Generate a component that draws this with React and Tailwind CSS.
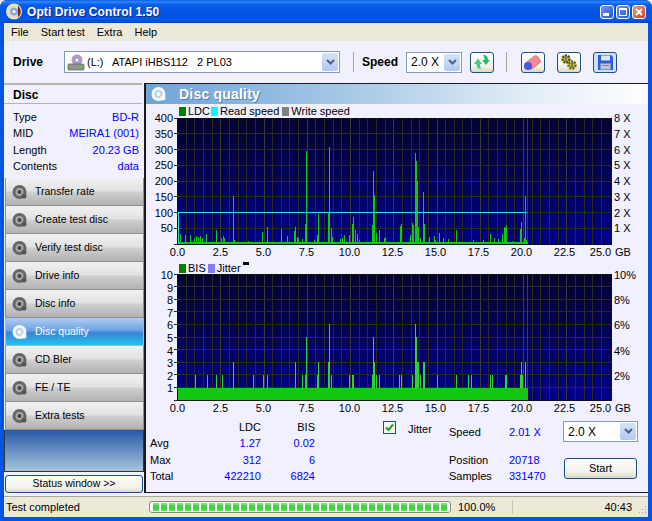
import React from 'react';

// spike positions read off the plots: [x, top] in screen pixels
const ldcBars = [
  [180, 234], [185, 235], [190, 235], [194, 238], [196, 236], [198, 237], [200, 236], [202, 238], [206, 234], [216, 230],
  [221, 238], [223, 236], [224, 238], [233, 196], [234, 240], [248, 241], [262, 232], [267, 227], [281, 229], [287, 236],
  [294, 231], [295, 227], [297, 237], [298, 238], [302, 239], [305, 224], [306, 151], [314, 240], [318, 214], [317, 235],
  [328, 212], [329, 147], [331, 228], [332, 237], [340, 239], [342, 238], [344, 235], [349, 235], [352, 224], [353, 217],
  [355, 230], [357, 234], [359, 240], [372, 225], [373, 171], [374, 195], [376, 233], [379, 230], [384, 238], [385, 237],
  [400, 226], [401, 224], [410, 235], [412, 223], [413, 225], [415, 153], [416, 161], [417, 181], [418, 227], [420, 238],
  [423, 192], [424, 224], [429, 237], [434, 236], [435, 240], [439, 233], [443, 238], [448, 239], [456, 230], [473, 240],
  [483, 240], [490, 234], [494, 238], [498, 239], [502, 234], [504, 227], [505, 228], [506, 225], [512, 241], [520, 229],
  [521, 222], [524, 238], [525, 196], [526, 240],
];

const bisBars = [
  [195, 2], [207, 2], [216, 2], [222, 2], [233, 3], [253, 2], [263, 2], [267, 2], [295, 3], [302, 2], [305, 2], [306, 5],
  [317, 2], [318, 3], [328, 3], [329, 6], [331, 2], [349, 2], [352, 2], [353, 2], [372, 2], [373, 5], [374, 3], [376, 2],
  [379, 2], [399, 2], [401, 2], [412, 2], [415, 6], [416, 5], [417, 3], [418, 3], [420, 2], [423, 3], [424, 3], [437, 2],
  [456, 2], [468, 2], [471, 2], [490, 2], [492, 2], [505, 2], [506, 2], [520, 2], [521, 3], [522, 2], [525, 3],
];

const xLabels = ['0.0', '2.5', '5.0', '7.5', '10.0', '12.5', '15.0', '17.5', '20.0', '22.5'];
const navItems = ['Transfer rate', 'Create test disc', 'Verify test disc', 'Drive info', 'Disc info', 'Disc quality', 'CD Bler', 'FE / TE', 'Extra tests'];

const DiscIcon = ({ active, light }) => (
  <svg width="16" height="16" viewBox="0 0 16 16" className="shrink-0">
    <circle cx="7.5" cy="8" r="7" fill={active || light ? '#f4f8ff' : '#666'} />
    <circle cx="7.5" cy="8" r="4" fill={active || light ? '#b8cfe8' : '#aaa'} />
    <circle cx="7.5" cy="8" r="2" fill={active || light ? '#fff' : '#444'} />
    <circle cx="12" cy="12" r="2.5" fill={active || light ? '#f4f8ff' : '#555'} />
  </svg>
);

const Plot = ({ id, top, step, rows, children }) => {
  const h = step * rows;
  const verticals = Array.from({ length: 50 }, (_, i) => 177.5 + i * 8.65);
  return (
    <svg width="438" height="128" viewBox={`174 ${top} 438 128`} shapeRendering="crispEdges" className="shrink-0">
      <defs>
        <linearGradient id={id} x1="0" y1="0" x2="0" y2="1">
          <stop offset="0" stopColor="#03032f" />
          <stop offset="1" stopColor="#000088" />
        </linearGradient>
      </defs>
      <rect x="177.5" y={top} width="433.5" height={h} fill={`url(#${id})`} />
      {verticals.map((x, i) => (
        <line key={i} x1={x} x2={x} y1={top} y2={top + h} stroke={i % 5 === 0 ? '#3b3b33' : '#2d2b20'} />
      ))}
      {Array.from({ length: rows + 1 }, (_, i) => (
        <g key={i}>
          <line x1="174" x2="611" y1={top + i * step} y2={top + i * step} stroke="#2d2b20" />
          <line x1="174" x2="178" y1={top + i * step} y2={top + i * step} stroke="#222" />
        </g>
      ))}
      <line x1="307.5" x2="307.5" y1={top} y2={top + h} stroke="#34346a" />
      <line x1="523.5" x2="523.5" y1={top} y2={top + h} stroke="#38386a" />
      <line x1="527.5" x2="527.5" y1={top} y2={top + h} stroke="#800c86" />
      {children}
      <rect x="177" y={top} width="1" height={h + 1} fill="#111" />
      <rect x="177" y={top} width="435" height="1" fill="#111" />
      <rect x="611" y={top} width="1" height={h + 1} fill="#111" />
      <rect x="177" y={top + h} width="435" height="1" fill="#111" />
    </svg>
  );
};

const AxisX = () => (
  <div className="flex h-[12px] leading-[13px] pl-[10px]">
    {xLabels.map((l) => (
      <span key={l} className="w-[43px] text-center">{l}</span>
    ))}
    <span className="w-[29px] text-center">25.0</span>
    <span>GB</span>
  </div>
);

const NavButton = ({ label, active }) => (
  <div
    className={`h-[28px] flex items-center gap-[7px] pl-[6px] text-[10.5px] border-b border-r border-l ${
      active
        ? 'bg-[linear-gradient(#afcdf3,#6ea3e2_45%,#3a84d2_55%,#22c2ef)] text-white border-[#9bb7d8]'
        : 'bg-[linear-gradient(#f1f1f1,#e2e2e2_48%,#cfcfcf_52%,#b2b2b2)] text-black border-[#8f8f8f]'
    }`}
  >
    <DiscIcon active={active} />
    <span>{label}</span>
  </div>
);

const Chevron = () => (
  <svg width="9" height="7" viewBox="0 0 9 7">
    <path d="M1 1 L4.5 4.5 L8 1" fill="none" stroke="#4d6185" strokeWidth="2" />
  </svg>
);

const Select = ({ className, btn, children }) => (
  <div className={`flex items-center bg-white border border-[#7f9db9] p-px ${className}`}>
    <div className="flex-1 flex items-center min-w-0">{children}</div>
    <div className={`${btn} self-stretch flex items-center justify-center rounded-[2px] bg-[linear-gradient(#d6e3fb,#b2c8f3)]`}>
      <Chevron />
    </div>
  </div>
);

const ToolButton = ({ blue, children }) => (
  <div
    className={`w-[24px] h-[21px] flex items-center justify-center rounded-[3px] border border-[#1f4f7f] ${
      blue ? 'bg-[#cfe0fb] border-[#1c4fb0]' : 'bg-[linear-gradient(#fefefe,#f3f1e6_70%,#dcd8c4)]'
    }`}
  >
    {children}
  </div>
);

const Dot = ({ children, value }) => (
  <div className="flex h-[16px] items-center">
    <span className="w-[60px]">{children}</span>
    <span className="text-[#0000ff]">{value}</span>
  </div>
);

export default function App() {
  return (
    <div className="w-[652px] h-[521px] flex flex-col rounded-t-[7px] bg-[#0453e2] overflow-hidden text-[11px] text-black font-['Liberation_Sans',sans-serif]">
      {/* title bar */}
      <div className="h-[23px] shrink-0 flex items-center pl-[6px] pr-[6px] bg-[linear-gradient(#0a5be6,#2f86f8_8%,#0a5fe8_20%,#0352e0_55%,#0458ea_85%,#0344c4)]">
        <svg width="17" height="17" viewBox="0 0 17 17" className="shrink-0">
          <circle cx="8" cy="8.5" r="8" fill="#eadfb8" />
          <path d="M12 2.5 A8 8 0 0 1 12 14.5 Z" fill="#7a2218" />
          <circle cx="8" cy="8.5" r="4" fill="#8aa6d8" />
          <circle cx="8" cy="8.5" r="1.6" fill="#fff" />
        </svg>
        <span className="ml-[4px] text-white font-bold text-[12px] tracking-[0.1px] [text-shadow:1px_1px_#0f2a89]">Opti Drive Control 1.50</span>
        <div className="ml-auto flex gap-[2px] items-center">
          <div className="w-[14px] h-[14px] rounded-[3px] border border-white bg-[linear-gradient(135deg,#6f97ee,#2a56d0)] flex items-end pl-[2px] pb-[2px]">
            <div className="w-[6px] h-[3px] bg-white" />
          </div>
          <div className="w-[14px] h-[14px] rounded-[3px] border border-white bg-[linear-gradient(135deg,#6f97ee,#2a56d0)] flex items-center justify-center">
            <div className="w-[8px] h-[8px] border border-white border-t-2" />
          </div>
          <div className="w-[14px] h-[14px] rounded-[3px] border border-white bg-[linear-gradient(135deg,#eda08a,#d0391a)] flex items-center justify-center">
            <svg width="8" height="8" viewBox="0 0 8 8">
              <path d="M1 1 L7 7 M7 1 L1 7" stroke="#fff" strokeWidth="2" />
            </svg>
          </div>
        </div>
      </div>

      <div className="mx-[4px] mb-[4px] flex-1 flex flex-col bg-[#f0f0ff] min-h-0">
        {/* menu */}
        <div className="h-[18px] shrink-0 bg-[#ece9d8] flex items-center pl-[7px] gap-[12px]">
          <span>File</span>
          <span>Start test</span>
          <span>Extra</span>
          <span>Help</span>
        </div>

        {/* toolbar */}
        <div className="h-[42px] shrink-0 flex items-center pl-[9px]">
          <span className="w-[51px] font-bold text-[12px]">Drive</span>
          <Select className="w-[276px] h-[22px]" btn="w-[16px]">
            <svg width="18" height="17" viewBox="0 0 18 17" className="ml-[1px] shrink-0">
              <ellipse cx="10" cy="6" rx="5.5" ry="5.5" fill="#a99ac9" />
              <circle cx="10" cy="6" r="1.6" fill="#fff" />
              <rect x="1" y="10" width="16" height="6" rx="1" fill="#8f9a8c" stroke="#55604f" strokeWidth="0.7" />
              <rect x="12" y="12" width="2" height="1.5" fill="#3ccf3c" />
            </svg>
            <span className="ml-[2px] whitespace-pre">(L:)   ATAPI iHBS112   2 PL03</span>
          </Select>
          <div className="ml-[13px] w-px h-[20px] bg-[#aaa89c]" />
          <span className="ml-[8px] w-[44px] font-bold text-[12px]">Speed</span>
          <Select className="w-[56px] h-[21px]" btn="w-[16px]">
            <span className="ml-[3px] text-[12px]">2.0 X</span>
          </Select>
          <div className="ml-[8px]">
            <ToolButton>
              <svg width="18" height="16" viewBox="0 0 18 16">
                <path d="M10 1 C14 1 15 3 15 6 L17 6 L13 11 L9 6 L11.5 6 C11.5 4 11 3 10 1 Z" fill="#2fb56a" />
                <path d="M8 15 C4 15 3.5 12 3.5 10 L1 10 L5 4.5 L9 10 L7 10 C7 12 7.5 13 8 15 Z" fill="#3fcf7f" />
              </svg>
            </ToolButton>
          </div>
          <div className="ml-[12px] w-px h-[20px] bg-[#aaa89c]" />
          <div className="ml-[14px] flex gap-[12px]">
            <ToolButton>
              <svg width="20" height="17" viewBox="0 0 20 17">
                <rect x="6" y="1" width="9" height="14" rx="3" transform="rotate(52 10 8)" fill="#f58b92" stroke="#c65a62" strokeWidth="0.5" />
                <circle cx="5" cy="12" r="4" fill="#4a55e6" />
              </svg>
            </ToolButton>
            <ToolButton>
              <svg width="20" height="18" viewBox="0 0 20 18">
                <circle cx="7" cy="6" r="3.5" fill="#c9c21a" stroke="#4d4a10" strokeWidth="2.5" strokeDasharray="2 1" />
                <circle cx="13" cy="12" r="3.5" fill="#c9c21a" stroke="#6a6510" strokeWidth="2.5" strokeDasharray="2 1" />
                <rect x="6" y="3" width="2" height="5" fill="#777" />
                <rect x="12" y="9" width="2" height="5" fill="#777" />
              </svg>
            </ToolButton>
            <ToolButton blue>
              <svg width="17" height="17" viewBox="0 0 17 17">
                <path d="M1 1 H14 L16 3 V16 H1 Z" fill="#2f5fd8" />
                <rect x="4" y="1.5" width="9" height="5" fill="#dfe6f6" />
                <rect x="3.5" y="9.5" width="10" height="6" fill="#c8c8c8" />
                <rect x="5" y="11" width="7" height="1" fill="#888" />
              </svg>
            </ToolButton>
          </div>
        </div>

        <div className="flex-1 flex min-h-0">
          {/* left column */}
          <div className="w-[140px] shrink-0 flex flex-col">
            <div className="border-t-2 border-[#b5b5b5] h-[21px] flex items-center pl-[9px] pt-[1px] font-bold text-[12px] border-b border-b-[#b5b5b5] mr-[2px]">Disc</div>
            <div className="h-[74px] pl-[9px] pr-[5px] pt-[5px]">
              {[
                ['Type', 'BD-R'],
                ['MID', 'MEIRA1 (001)'],
                ['Length', '20.23 GB'],
                ['Contents', 'data'],
              ].map(([k, v]) => (
                <div key={k} className="h-[16.3px] flex items-center justify-between">
                  <span>{k}</span>
                  <span className="text-[#0000ff]">{v}</span>
                </div>
              ))}
            </div>
            <div className="ml-[1px]">
              {navItems.map((n) => (
                <NavButton key={n} label={n} active={n === 'Disc quality'} />
              ))}
            </div>
            <div className="h-[42px] shrink-0 border-x border-b border-[#333] bg-[linear-gradient(#2859a6,#a6c5dc)]" />
            <div className="mt-[3px] mx-[1px] h-[18px] flex items-center justify-center text-[10.5px] rounded-[3px] border border-[#1b4a94] bg-[linear-gradient(#fdfdfb,#f2f1ea_75%,#dcd8c8)]">
              Status window &gt;&gt;
            </div>
          </div>

          {/* main panel */}
          <div className="flex-1 mb-[3px] flex flex-col border-l-2 border-t border-b border-[#1b1b1b] min-w-0">
            <div className="h-[20px] shrink-0 flex items-center pl-[5px] bg-[linear-gradient(90deg,#6fa3d6,#aecde8_45%,#e0ecf5_75%,#ffffff)]">
              <DiscIcon light />
              <span className="ml-[12px] text-white font-bold text-[14px] tracking-[0.2px] [text-shadow:1px_1px_#4f7fb0]">Disc quality</span>
            </div>
            <div className="flex-1 flex flex-col min-h-0">
              {/* LDC chart */}
              <div className="h-[14px] flex items-center pl-[33px] pt-[1px]">
                <span className="w-[7px] h-[9px] bg-[#008000]" />
                <span className="ml-[2px]">LDC</span>
                <span className="ml-[1px] w-[7px] h-[9px] bg-[#00ffff]" />
                <span className="ml-[2px]">Read speed</span>
                <span className="ml-[3px] w-[7px] h-[9px] bg-[#808080]" />
                <span className="ml-[2px]">Write speed</span>
              </div>
              <div className="flex">
                <div className="w-[28px] -mt-[7px] pr-[1px] text-right">
                  {[400, 350, 300, 250, 200, 150, 100, 50].map((n) => (
                    <div key={n} className="h-[15.75px] leading-[15.75px]">{n}</div>
                  ))}
                </div>
                <Plot id="ldcBg" top={118} step={15.75} rows={8}>
                  {ldcBars.map(([x, y], i) => (
                    <rect key={i} x={x} y={y} width="1" height={244 - y} fill="#10c810" />
                  ))}
                  <rect x="178" y="242" width="350" height="2" fill="#10c810" />
                  <path d="M178.5 244 V212.5 H527" fill="none" stroke="#2fe0e0" />
                </Plot>
                <div className="-mt-[7px] pl-[2px]">
                  {['8 X', '7 X', '6 X', '5 X', '4 X', '3 X', '2 X', '1 X'].map((n) => (
                    <div key={n} className="h-[15.75px] leading-[15.75px]">{n}</div>
                  ))}
                </div>
              </div>
              <AxisX />

              {/* BIS chart */}
              <div className="mt-[3px] h-[13px] flex items-center pl-[33px] pt-[1px]">
                <span className="w-[7px] h-[9px] bg-[#008000]" />
                <span className="ml-[2px]">BIS</span>
                <span className="ml-[2px] w-[7px] h-[9px] bg-[#8080ff]" />
                <span className="ml-[2px]">Jitter</span>
                <span className="ml-[2px] mb-[10px] w-[6px] h-[3px] bg-black" />
              </div>
              <div className="flex">
                <div className="w-[28px] -mt-[5px] pr-[1px] text-right">
                  {[10, 9, 8, 7, 6, 5, 4, 3, 2, 1].map((n) => (
                    <div key={n} className="h-[12.6px] leading-[12.6px]">{n}</div>
                  ))}
                </div>
                <Plot id="bisBg" top={274} step={12.6} rows={10}>
                  {bisBars.map(([x, v], i) => (
                    <rect key={i} x={x} y={400 - v * 12.6} width="1" height={v * 12.6} fill="#33d42a" />
                  ))}
                  <rect x="178" y="388" width="350" height="12.6" fill="#10c810" />
                </Plot>
                <div className="-mt-[11px] pl-[2px]">
                  {['10%', '8%', '6%', '4%', '2%'].map((n) => (
                    <div key={n} className="h-[25.2px] leading-[25.2px]">{n}</div>
                  ))}
                </div>
              </div>
              <AxisX />

              {/* stats */}
              <div className="flex mt-[6px]">
                <div className="ml-[4px] -mt-[1px] w-[165px] self-start grid grid-cols-[44px_67px_54px] auto-rows-[16.3px] items-center">
                  <span />
                  <span className="text-right">LDC</span>
                  <span className="text-right">BIS</span>
                  <span>Avg</span>
                  <span className="text-right text-[#0000ff]">1.27</span>
                  <span className="text-right text-[#0000ff]">0.02</span>
                  <span>Max</span>
                  <span className="text-right text-[#0000ff]">312</span>
                  <span className="text-right text-[#0000ff]">6</span>
                  <span>Total</span>
                  <span className="text-right text-[#0000ff]">422210</span>
                  <span className="text-right text-[#0000ff]">6824</span>
                </div>
                <div className="ml-[68px] w-[66px] flex items-start pt-[1px]">
                  <div className="w-[13px] h-[13px] border border-[#1c5180] bg-[#f6f6ee] flex items-center justify-center">
                    <svg width="9" height="9" viewBox="0 0 9 9">
                      <path d="M1 4.5 L3.5 7 L8 1.5" fill="none" stroke="#21a121" strokeWidth="2" />
                    </svg>
                  </div>
                  <span className="ml-[12px] leading-[16px]">Jitter</span>
                </div>
                <div className="w-[114px] pt-[4px]">
                  <Dot value="2.01 X">Speed</Dot>
                  <div className="h-[12px]" />
                  <Dot value="20718">Position</Dot>
                  <Dot value="331470">Samples</Dot>
                </div>
                <div className="w-[75px] pt-[1px]">
                  <Select className="h-[21px]" btn="w-[16px]">
                    <span className="ml-[3px] text-[12px]">2.0 X</span>
                  </Select>
                  <div className="mt-[16px] mx-[1px] h-[21px] flex items-center justify-center rounded-[3px] border border-[#1c4f86] bg-[linear-gradient(#fefefe,#f3f2ea_70%,#d8d4c4)]">
                    Start
                  </div>
                </div>
              </div>
            </div>
          </div>
        </div>

        {/* status bar */}
        <div className="h-[21px] shrink-0 bg-[#ece9d8] border-t border-[#a9a798] flex items-center">
          <span className="ml-[2px] w-[143px]">Test completed</span>
          <div className="w-[302px] h-[12px] flex items-center gap-[2px] pl-[3px] rounded-[3px] border border-[#8a8a80] bg-white overflow-hidden">
            {Array.from({ length: 37 }, (_, i) => (
              <div key={i} className="w-[6px] h-[8px] shrink-0 bg-[linear-gradient(#8be88b,#36cc36_50%,#5cdc5c)]" />
            ))}
          </div>
          <span className="ml-[7px]">100.0%</span>
          <div className="ml-[17px] w-px h-[14px] bg-[#c6c3b0]" />
          <span className="ml-auto mr-[6px]">40:43</span>
          <svg width="9" height="16" viewBox="0 0 9 16" className="self-end mr-px">
            <path d="M7 5h1v1h-1zM4 8h1v1h-1zM7 8h1v1h-1zM1 11h1v1h-1zM4 11h1v1h-1zM7 11h1v1h-1z" fill="#a9a798" />
          </svg>
        </div>
      </div>
    </div>
  );
}
